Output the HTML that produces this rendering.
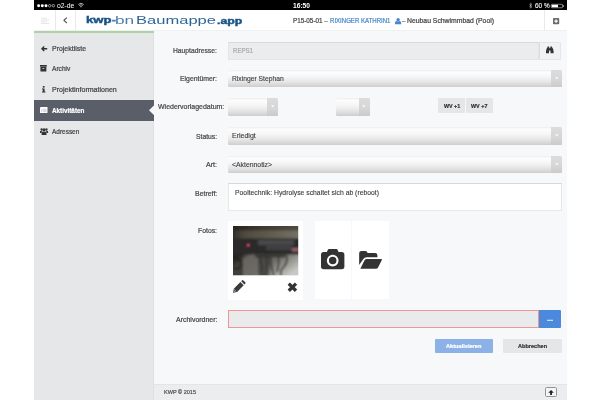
<!DOCTYPE html>
<html><head><meta charset="utf-8"><title>kwp-bnBaumappe.app</title>
<style>
*{box-sizing:border-box;margin:0;padding:0}
html,body{width:600px;height:400px;background:#fff;overflow:hidden}
body{font-family:"Liberation Sans",sans-serif;position:relative;color:#444}
#app{position:absolute;left:34px;top:0;width:533px;height:400px;background:#f7f8fa;overflow:hidden}
.a{position:absolute}
.t{-webkit-text-stroke:0.22px currentColor;position:absolute;white-space:nowrap;line-height:10px;height:10px;transform-origin:0 50%;display:block}
#status{left:0;top:0;width:533px;height:10px;background:#000}
#header{left:0;top:10px;width:533px;height:21px;background:#fff;border-bottom:1px solid #eef0f1}
.vsep{position:absolute;top:10px;width:1px;height:21px;background:#e9e9e9}
#green{left:0;top:31px;width:119.8px;height:2px;background:#acd2a6}
#sidebar{left:0;top:33px;width:119.8px;height:367px;background:#e6e7e9;border-right:1px solid #dfe0e3}
#act{left:0;top:100px;width:120px;height:20.9px;background:#5a5e68}

.sel{position:absolute;height:17.6px;border-radius:1.5px;background:linear-gradient(#ededed 0%,#fdfdfd 12%,#f6f6f6 40%,#e6e6e6 70%,#cecece 100%);}
.sel i{position:absolute;right:0;top:0;bottom:0;width:11px;background:linear-gradient(#dcdcdc,#d6d6d6 60%,#cacaca);border-radius:0 1.5px 1.5px 0}
.sel i svg{position:absolute;left:3.7px;top:7px;width:3.6px;height:2.6px}
.inp{position:absolute;background:#ebecee;border:1px solid #e4e5e7;border-top-color:#d8d9db}
.card{position:absolute;background:#fff}
.btn{position:absolute;border-radius:1px}
#footer{left:119.8px;top:384px;width:414px;height:16px;background:#ecedef;border-top:1px solid #e4e5e7}
svg{position:absolute;overflow:visible}
</style></head><body>
<div id="app">
 <div class="a" id="status">
  <svg style="left:3px;top:3.7px" width="18.4" height="3.4" viewBox="0 0 18.4 3.4"><circle cx="1.6" cy="1.7" r="1.5" fill="#fff"/><circle cx="5.3" cy="1.7" r="1.5" fill="#fff"/><circle cx="9" cy="1.7" r="1.5" fill="#fff"/><circle cx="12.7" cy="1.7" r="1.25" fill="none" stroke="#fff" stroke-width="0.55"/><circle cx="16.4" cy="1.7" r="1.25" fill="none" stroke="#fff" stroke-width="0.55"/></svg>
  <svg style="left:44px;top:3.2px" width="6" height="4.4" viewBox="0 0 6 4.4"><path d="M0.3 1.5 A3.9 3.9 0 0 1 5.7 1.5" fill="none" stroke="#fff" stroke-width="0.7"/><path d="M1.3 2.6 A2.4 2.4 0 0 1 4.7 2.6" fill="none" stroke="#fff" stroke-width="0.7"/><circle cx="3" cy="3.7" r="0.6" fill="#fff"/></svg>
  <svg style="left:494.7px;top:2.8px" width="3.4" height="5.4" viewBox="0 0 3.4 5.4"><path d="M0.3 1.5 L3 3.9 L1.6 5.2 L1.6 0.2 L3 1.5 L0.3 3.9" fill="none" stroke="#ddd" stroke-width="0.5"/></svg>
  <svg style="left:517px;top:3.5px" width="13" height="4" viewBox="0 0 13 4"><rect x="0.25" y="0.25" width="11.3" height="3.5" rx="0.7" fill="none" stroke="#fff" stroke-width="0.5"/><rect x="0.8" y="0.8" width="6.2" height="2.4" fill="#fff"/><rect x="11.9" y="1.3" width="0.8" height="1.4" fill="#fff"/></svg>
 </div>
 <div class="a" id="header"></div>
 <div class="vsep" style="left:21px"></div><div class="vsep" style="left:41.2px"></div><div class="vsep" style="left:510px"></div>
 <!-- hamburger -->
 <svg style="left:6.6px;top:17.9px" width="8.4" height="6" viewBox="0 0 8.4 6"><path d="M0 0.4H6M0 2.1H8.4M0 3.8H6M0 5.5H8.4" stroke="#dedede" stroke-width="0.75" fill="none"/></svg>
 <!-- back chevron -->
 <svg style="left:29px;top:17.1px" width="4.4" height="6.6" viewBox="0 0 4.5 6.6"><path d="M3.9 0.5 L1 3.3 L3.9 6.1" stroke="#555" stroke-width="1.2" fill="none"/></svg>
 <!-- logo -->
  <!-- user icon -->
 <svg style="left:360.8px;top:17.9px" width="6.2" height="6.2" viewBox="0 0 5.6 5.6"><circle cx="2.8" cy="1.5" r="1.55" fill="#4a86c8"/><path d="M0 5.6 V4.3 Q0 2.9 1.6 2.8 Q2.8 3.6 4 2.8 Q5.6 2.9 5.6 4.3 V5.6Z" fill="#4a86c8"/></svg>
 <!-- plus square -->
 <svg style="left:519px;top:17.7px" width="6.2" height="6.2" viewBox="0 0 6.2 6.2"><rect width="6.2" height="6.2" rx="0.8" fill="#6a6a6a"/><path d="M3.1 1.3V4.9M1.3 3.1H4.9" stroke="#fff" stroke-width="1.1"/></svg>
 <div class="a" id="green"></div>
 <div class="a" id="sidebar"></div>
 <div class="a" id="act"></div>
 <svg style="left:114.6px;top:105.4px" width="5.4" height="10.4" viewBox="0 0 5.4 10.4"><path d="M5.4 0 L0 5.2 L5.4 10.4Z" fill="#f7f8fa"/></svg>
 <!-- sidebar icons -->
 <svg style="left:6.8px;top:45.5px" width="6.2" height="5.6" viewBox="0 0 6.2 5.6"><path d="M2.7 0 L0 2.8 L2.7 5.6 L3.7 4.6 L2.65 3.5 H6.2 V2.1 H2.65 L3.7 1Z" fill="#333"/></svg>
 <svg style="left:6.2px;top:65.1px" width="6.8" height="6.4" viewBox="0 0 6.8 6.4"><rect x="0" y="0" width="6.8" height="1.7" fill="#333"/><path d="M0.45 2.1H6.35V6.4H0.45Z M2.5 2.9V3.7H4.3V2.9Z" fill="#333" fill-rule="evenodd"/></svg>
 <svg style="left:7.8px;top:86px" width="3.4" height="6.6" viewBox="0 0 3.4 6.6"><rect x="0.8" y="0" width="1.8" height="1.6" fill="#333"/><path d="M0 2.4H2.6V5.6H3.4V6.6H0V5.6H0.8V3.4H0Z" fill="#333"/></svg>
 <svg style="left:6px;top:107px" width="7.5" height="6.1" viewBox="0 0 7.5 6.1"><rect width="7.5" height="6.1" rx="0.5" fill="#fff"/><path d="M1 2.2H2M2.6 2.2H6.6M1 3.4H2M2.6 3.4H6.6M1 4.6H2M2.6 4.6H6.6" stroke="#c3c6cc" stroke-width="0.7"/></svg>
 <svg style="left:5.7px;top:127.8px" width="8.1" height="6.9" viewBox="0 0 8.1 6.9"><circle cx="1.6" cy="1.5" r="1.15" fill="#333"/><circle cx="6.5" cy="1.5" r="1.15" fill="#333"/><circle cx="4.05" cy="1.8" r="1.6" fill="#333"/><path d="M0 4.9V3.8Q0 2.7 1.1 2.7H2.2Q1.5 3.6 1.6 4.9Z" fill="#333"/><path d="M8.1 4.9V3.8Q8.1 2.7 7 2.7H5.9Q6.6 3.6 6.5 4.9Z" fill="#333"/><path d="M1.6 6.9V5.2Q1.6 3.6 3 3.6Q4.05 4.3 5.1 3.6Q6.5 3.6 6.5 5.2V6.9Z" fill="#333"/></svg>

 <!-- form controls -->
 <div class="inp" style="left:194px;top:42.2px;width:311px;height:17.5px"></div>
 <div class="a" style="left:504.7px;top:42.2px;width:22.6px;height:17.5px;background:#f1f2f4;border:1px solid #e4e5e7;border-left:1px solid #dcdcdc;border-radius:0 1.5px 1.5px 0"></div>
 <svg style="left:511.8px;top:46.2px" width="7.6" height="7.2" viewBox="0 0 7.6 7.2"><path d="M1.6 0.4H3.1V1.4H3.4V5.2H3V7.2H0V5.2Q0 3.5 1.2 1.4H1.6Z M4.5 0.4H6V1.4H6.4Q7.6 3.5 7.6 5.2V7.2H4.6V5.2H4.2V1.4H4.5Z M3.4 2.2H4.2V4.2H3.4Z" fill="#333"/></svg>

 <div class="sel" style="left:194px;top:69.6px;width:334px"><i><svg viewBox="0 0 4 3"><path d="M0 0.3H4L2 2.8Z" fill="#fafafa"/></svg></i></div>
 <div class="sel" style="left:194px;top:98.2px;width:50px"><i><svg viewBox="0 0 4 3"><path d="M0 0.3H4L2 2.8Z" fill="#fafafa"/></svg></i></div>
 <div class="sel" style="left:301.5px;top:98.2px;width:34px"><i><svg viewBox="0 0 4 3"><path d="M0 0.3H4L2 2.8Z" fill="#fafafa"/></svg></i></div>
 <div class="btn" style="left:404.3px;top:97.9px;width:26.6px;height:14.9px;background:#e5e6e8"></div>
 <div class="btn" style="left:431.8px;top:97.9px;width:27.2px;height:14.9px;background:#e5e6e8"></div>
 <div class="sel" style="left:194px;top:127px;width:334px"><i><svg viewBox="0 0 4 3"><path d="M0 0.3H4L2 2.8Z" fill="#fafafa"/></svg></i></div>
 <div class="sel" style="left:194px;top:155.5px;width:334px"><i><svg viewBox="0 0 4 3"><path d="M0 0.3H4L2 2.8Z" fill="#fafafa"/></svg></i></div>
 <div class="a" style="left:194px;top:183.3px;width:334px;height:27.3px;background:#fff;border:1px solid #e6e7e9;border-top-color:#d7d8da"></div>

 <!-- photos -->
 <div class="card" style="left:194.2px;top:221.2px;width:74.6px;height:78.8px"></div>
 <svg style="left:199px;top:225.8px" width="65.2" height="49.2" viewBox="0 0 65.2 49.2">
  <defs>
   <linearGradient id="pg1" x1="0" y1="0" x2="1" y2="0"><stop offset="0" stop-color="#262320"/><stop offset="0.45" stop-color="#3e3a31"/><stop offset="1" stop-color="#504c40"/></linearGradient>
   <linearGradient id="pg2" x1="0" y1="0" x2="1" y2="0"><stop offset="0" stop-color="#2a2724"/><stop offset="0.2" stop-color="#4e4a3f"/><stop offset="0.6" stop-color="#625e51"/><stop offset="1" stop-color="#77736a"/></linearGradient>
   <linearGradient id="pg3" x1="0" y1="0" x2="1" y2="0.5"><stop offset="0" stop-color="#2c2a27"/><stop offset="0.16" stop-color="#34322f"/><stop offset="0.24" stop-color="#66645e"/><stop offset="0.6" stop-color="#6e6c66"/><stop offset="0.82" stop-color="#9d9d98"/><stop offset="1" stop-color="#c8c8c4"/></linearGradient>
   <filter id="bl" x="-10%" y="-10%" width="120%" height="120%"><feGaussianBlur stdDeviation="1"/></filter>
   <filter id="bl2" x="-50%" y="-50%" width="200%" height="200%"><feGaussianBlur stdDeviation="0.8"/></filter>
   <clipPath id="pc"><rect width="65.2" height="49.2"/></clipPath>
  </defs>
  <g clip-path="url(#pc)">
   <rect width="65.2" height="49.2" fill="#3a3733"/>
   <g filter="url(#bl)">
    <rect x="-3" y="-3" width="72" height="8" fill="url(#pg1)"/>
    <rect x="-3" y="4.5" width="72" height="8.5" fill="url(#pg2)"/>
    <rect x="-3" y="12.5" width="72" height="16.5" fill="#2b292b"/>
    <rect x="25" y="14" width="36" height="5" fill="#4a4a4c"/>
    <rect x="33" y="18" width="26" height="6" fill="#414143"/>
    <rect x="-3" y="28.5" width="72" height="24" fill="url(#pg3)"/>
    <path d="M0 31 Q9 33 8.5 39 Q7 44 0 42.5" stroke="#151311" stroke-width="1.3" fill="none"/>
    <path d="M24 28 Q30 34 29 50 M33 28 Q35 40 32 50 M38 28 Q37 38 41 50 M45 28 Q47 36 44 46 M53 28 Q56 36 50 42 Q47 44 48 50" stroke="#3c3a36" stroke-width="1.7" fill="none"/>
    <path d="M22 30 H52" stroke="#3a3835" stroke-width="3" fill="none"/><rect x="25" y="29" width="12" height="22" fill="#2e2c29" opacity="0.5"/><rect x="-3" y="28" width="13" height="24" fill="#262422" opacity="0.6"/>
    <rect x="59" y="22" width="7" height="3.5" fill="#96606a"/>
   </g>
   <circle cx="15.3" cy="19.2" r="1.7" fill="#e02c58" filter="url(#bl2)"/>
   <circle cx="15.3" cy="19.2" r="0.7" fill="#ff8aa6" filter="url(#bl2)"/>
  </g>
 </svg>
 <!-- pencil -->
 <svg style="left:198.8px;top:280.4px" width="12.6" height="12.9" viewBox="0 0 12.6 12.6"><path d="M0 12.6 L0.8 8.5 L7.4 1.9 L10.7 5.2 L4.1 11.8Z M8.2 1.1 L9.2 0.2 Q9.8 -0.3 10.4 0.3 L12.3 2.2 Q12.9 2.8 12.3 3.4 L11.4 4.4Z" fill="#3a3a3a"/><path d="M1 9.2 L3.4 11.6" stroke="#fff" stroke-width="0.55"/><path d="M0.9 10.9 L1.7 11.7" stroke="#fff" stroke-width="0.7"/></svg>
 <!-- times -->
 <svg style="left:253.4px;top:282.2px" width="10.8" height="10.4" viewBox="0 0 10.4 10"><path d="M1.7 1.6 L8.7 8.4 M8.7 1.6 L1.7 8.4" stroke="#333" stroke-width="3.2" stroke-linecap="butt"/></svg>

 <div class="card" style="left:280.8px;top:220.8px;width:36.7px;height:78.6px"></div>
 <div class="card" style="left:318.3px;top:220.8px;width:36.8px;height:78.6px"></div>
 <!-- camera -->
 <svg style="left:286.8px;top:248.8px" width="23.4" height="20.3" viewBox="0 0 24.3 21"><path d="M8.2 0H16.1Q16.9 0 17.3 0.9L18.2 3.2H21.5Q24.3 3.2 24.3 6V18.2Q24.3 21 21.5 21H2.8Q0 21 0 18.2V6Q0 3.2 2.8 3.2H6.1L7 0.9Q7.4 0 8.2 0Z M12.15 5.9A6.1 6.1 0 1 0 12.15 18.1A6.1 6.1 0 1 0 12.15 5.9Z M12.15 8.1A3.9 3.9 0 1 1 12.15 15.9A3.9 3.9 0 1 1 12.15 8.1Z" fill="#333" fill-rule="evenodd"/></svg>
 <!-- folder open -->
 <svg style="left:325px;top:250.5px" width="23.1" height="17.7" viewBox="0 0 23.7 18.4"><path d="M0 14.5V2.4Q0 0 2.4 0H6.3Q8.7 0 8.7 2.2H16.6Q19 2.2 19 4.6V6.4H7.6Q5.6 6.4 4.4 8.2Z" fill="#333"/><path d="M1.2 18.4 L5.6 9.6 Q6.4 8.2 8 8.2 H22.8 Q24.2 8.2 23.5 9.6 L19.8 16.8 Q19 18.4 17.4 18.4Z" fill="#333"/></svg>

 <!-- archiv -->
 <div class="a" style="left:194px;top:310px;width:311px;height:17.6px;background:#e9eaec;border:1px solid #f29494"></div>
 <div class="a" style="left:504.7px;top:310px;width:22.8px;height:17.8px;background:#4a89dc;border-radius:0 1px 1px 0"></div>
 <div class="btn" style="left:400.5px;top:338.6px;width:58.2px;height:14.3px;background:#8cb1e7"></div>
 <div class="btn" style="left:469.1px;top:338.6px;width:58.8px;height:14.3px;background:#e5e6e8"></div>

 <div class="a" id="footer"></div>
 <div class="a" style="left:511.2px;top:387.2px;width:11.6px;height:10.3px;background:#f4f4f4;border:1px solid #949494;border-radius:1.5px"></div>
 <svg style="left:514.1px;top:389.9px" width="6.1" height="4.9" viewBox="0 0 6.2 5.4"><path d="M3.1 0 L6.2 3 H4.1 V5.4 H2.1 V3 H0Z" fill="#222"/></svg>
<span class="t" id="s_carrier" style="left:23.20px;top:0.60px;font-size:6.8px;color:#fff;font-weight:normal;transform:scaleX(1.0005);-webkit-text-stroke-width:0">o2-de</span>
<span class="t" id="s_time" style="left:259.00px;top:0.50px;font-size:6.3px;color:#fff;font-weight:bold;transform:scaleX(1.0553);-webkit-text-stroke-width:0">16:50</span>
<span class="t" id="s_batt" style="left:501.00px;top:0.50px;font-size:6.3px;color:#fff;font-weight:normal;transform:scaleX(1.0168);-webkit-text-stroke-width:0.1px">60 %</span>
<span class="t" id="t1" style="left:259.00px;top:16.40px;font-size:7px;color:#444;font-weight:normal;transform:scaleX(0.9032);">P15-05-01 –</span>
<span class="t" id="t2" style="left:296.00px;top:16.40px;font-size:7px;color:#4a86c8;font-weight:normal;transform:scaleX(0.8656);">RIXINGER KATHRIN1</span>
<span class="t" id="t3" style="left:368.20px;top:16.40px;font-size:7px;color:#444;font-weight:normal;transform:scaleX(0.8704);">–</span>
<span class="t" id="t4" style="left:373.00px;top:16.40px;font-size:7px;color:#444;font-weight:normal;transform:scaleX(0.9763);">Neubau Schwimmbad (Pool)</span>
<span class="t" id="m1" style="left:18.20px;top:43.50px;font-size:7px;color:#444;font-weight:normal;transform:scaleX(0.9932);">Projektliste</span>
<span class="t" id="m2" style="left:18.20px;top:64.30px;font-size:7px;color:#444;font-weight:normal;transform:scaleX(0.9407);">Archiv</span>
<span class="t" id="m3" style="left:18.20px;top:84.90px;font-size:7px;color:#444;font-weight:normal;transform:scaleX(1.0093);">Projektinformationen</span>
<span class="t" id="m4" style="left:17.70px;top:105.60px;font-size:7px;color:#fff;font-weight:bold;transform:scaleX(0.9051);">Aktivitäten</span>
<span class="t" id="m5" style="left:17.70px;top:126.50px;font-size:7px;color:#444;font-weight:normal;transform:scaleX(0.9230);">Adressen</span>
<span class="t" id="l1" style="left:139.25px;top:46.40px;font-size:7px;color:#484848;font-weight:normal;transform:scaleX(0.9609);">Hauptadresse:</span>
<span class="t" id="l2" style="left:146.00px;top:74.00px;font-size:7px;color:#484848;font-weight:normal;transform:scaleX(0.9801);">Eigentümer:</span>
<span class="t" id="l3" style="left:124.25px;top:102.20px;font-size:7px;color:#484848;font-weight:normal;transform:scaleX(0.9958);">Wiedervorlagedatum:</span>
<span class="t" id="l4" style="left:161.75px;top:131.90px;font-size:7px;color:#484848;font-weight:normal;transform:scaleX(0.9657);">Status:</span>
<span class="t" id="l5" style="left:171.75px;top:160.00px;font-size:7px;color:#484848;font-weight:normal;transform:scaleX(1.0146);">Art:</span>
<span class="t" id="l6" style="left:160.50px;top:188.50px;font-size:7px;color:#484848;font-weight:normal;transform:scaleX(0.9932);">Betreff:</span>
<span class="t" id="l7" style="left:164.00px;top:226.20px;font-size:7px;color:#484848;font-weight:normal;transform:scaleX(0.9767);">Fotos:</span>
<span class="t" id="l8" style="left:141.50px;top:315.10px;font-size:7px;color:#484848;font-weight:normal;transform:scaleX(0.9966);">Archivordner:</span>
<span class="t" id="v1" style="left:199.00px;top:46.00px;font-size:7px;color:#aaa;font-weight:normal;transform:scaleX(0.8707);">REPS1</span>
<span class="t" id="v2" style="left:198.00px;top:73.50px;font-size:7px;color:#3c3c3c;font-weight:normal;transform:scaleX(0.9636);-webkit-text-stroke-width:0.12px">Rixinger Stephan</span>
<span class="t" id="v4" style="left:198.00px;top:131.00px;font-size:7px;color:#3c3c3c;font-weight:normal;transform:scaleX(1.0007);-webkit-text-stroke-width:0.12px">Erledigt</span>
<span class="t" id="v5" style="left:198.00px;top:159.50px;font-size:7px;color:#3c3c3c;font-weight:normal;transform:scaleX(0.9786);-webkit-text-stroke-width:0.12px">&lt;Aktennotiz&gt;</span>
<span class="t" id="v6" style="left:201.00px;top:187.50px;font-size:7px;color:#3c3c3c;font-weight:normal;transform:scaleX(0.9739);-webkit-text-stroke-width:0.12px">Pooltechnik: Hydrolyse schaltet sich ab (reboot)</span>
<span class="t" id="b1" style="left:409.60px;top:100.50px;font-size:5.8px;color:#333;font-weight:bold;transform:scaleX(0.9224);">WV +1</span>
<span class="t" id="b2" style="left:437.20px;top:100.50px;font-size:5.8px;color:#333;font-weight:bold;transform:scaleX(0.9338);">WV +7</span>
<span class="t" id="b3" style="left:411.90px;top:340.90px;font-size:6px;color:#fff;font-weight:bold;transform:scaleX(0.9393);">Aktualisieren</span>
<span class="t" id="b4" style="left:483.90px;top:340.90px;font-size:6px;color:#333;font-weight:bold;transform:scaleX(0.9284);">Abbrechen</span>
<span class="t" id="b5" style="left:513.00px;top:314.30px;font-size:6.4px;color:#fff;font-weight:bold;transform:scaleX(1.1261);">...</span>
<span class="t" id="g1" style="left:51.70px;top:15.40px;font-size:9.8px;color:#1a5486;font-weight:bold;transform:scaleX(1.3377);-webkit-text-stroke-width:0.45px">kwp</span>
<span class="t" id="g2" style="left:77.60px;top:14.90px;font-size:9.8px;color:#4585c6;font-weight:bold;transform:scaleX(1.1636);-webkit-text-stroke-width:0.6px">-</span>
<span class="t" id="g3" style="left:81.40px;top:15.40px;font-size:10.6px;color:#4d7fae;font-weight:normal;transform:scaleX(1.6275);-webkit-text-stroke-width:0">bn</span>
<span class="t" id="g4" style="left:102.00px;top:15.40px;font-size:10.6px;color:#2d6496;font-weight:normal;transform:scaleX(1.5610);-webkit-text-stroke-width:0">Baumappe</span>
<span class="t" id="g5" style="left:183.00px;top:15.80px;font-size:9.8px;color:#1a5486;font-weight:bold;transform:scaleX(1.2562);-webkit-text-stroke-width:0.45px">.app</span>
<span class="t" id="f1" style="left:130.00px;top:387.40px;font-size:5.8px;color:#505050;font-weight:normal;transform:scaleX(0.9552);">KWP © 2015</span>
</div>

</body></html>
